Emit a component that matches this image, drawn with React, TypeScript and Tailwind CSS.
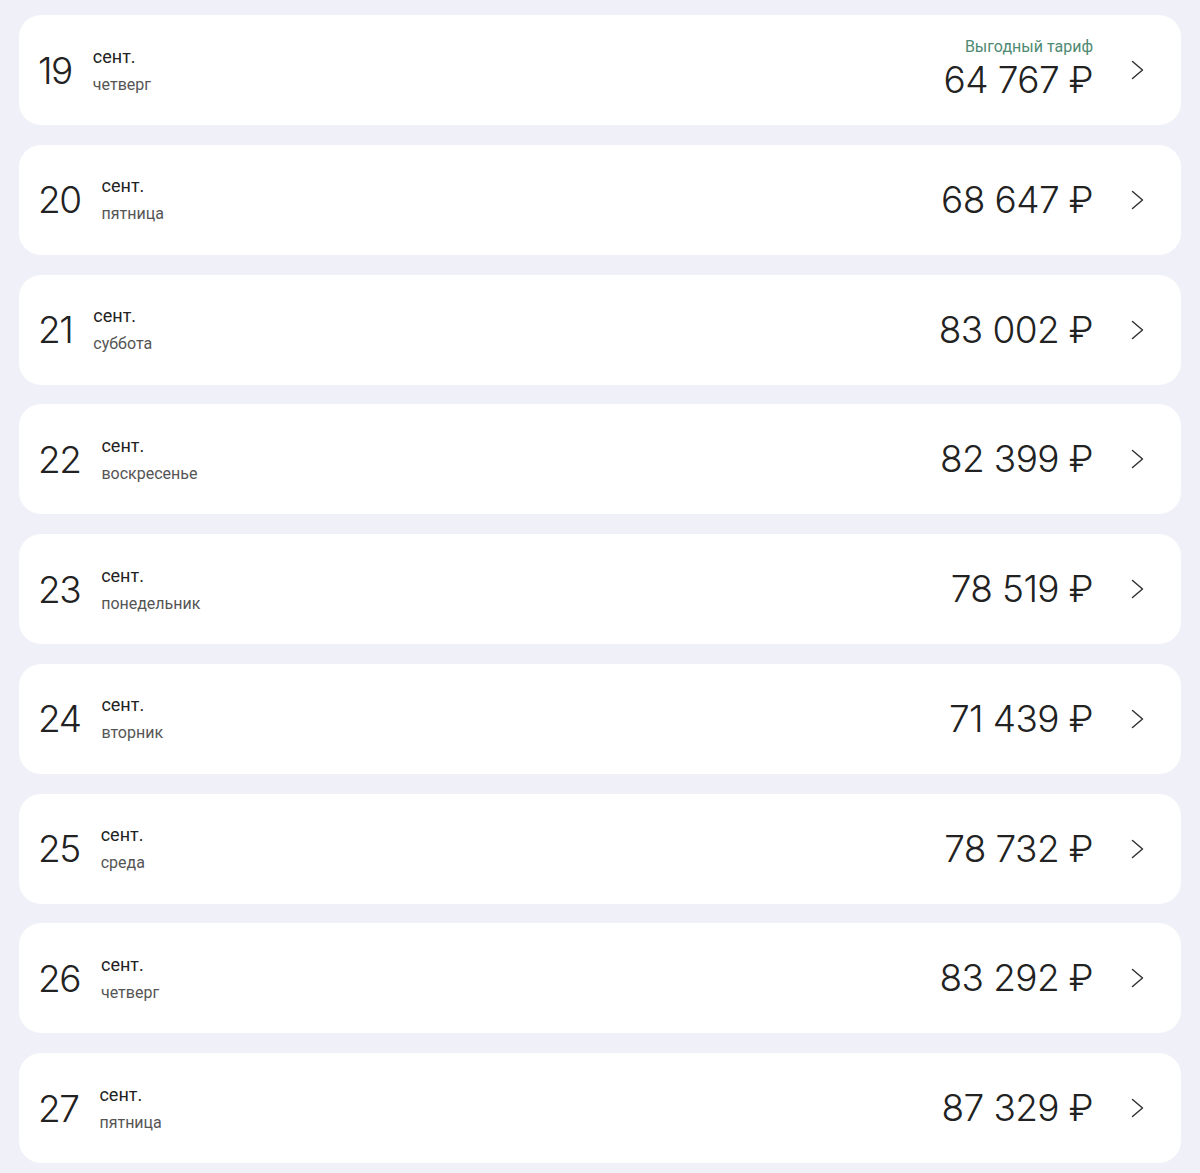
const days = [
    { d: '19', w: 'четверг', p: '64 767', best: true },
    { d: '20', w: 'пятница', p: '68 647' },
    { d: '21', w: 'суббота', p: '83 002' },
    { d: '22', w: 'воскресенье', p: '82 399' },
    { d: '23', w: 'понедельник', p: '78 519' },
    { d: '24', w: 'вторник', p: '71 439' },
    { d: '25', w: 'среда', p: '78 732' },
    { d: '26', w: 'четверг', p: '83 292' },
    { d: '27', w: 'пятница', p: '87 329' },
];

const Chevron = () => (
    <svg viewBox="0 0 13 20" className="h-[20px] w-[13px]" fill="none" stroke="#333" strokeWidth={1.5} strokeLinecap="round" strokeLinejoin="round">
        <path d="M1.5 1.5l10 8.5-10 8.5" />
    </svg>
);

export default function App() {
    return (
        <div className="min-h-[1173px] bg-[#f0f1f8] px-[19px] pt-[15px] pb-[10px] font-['Roboto',sans-serif]">
            <div className="flex flex-col gap-[19.75px]">
                {days.map((x) => (
                    <div key={x.d} className="flex h-[110px] items-center rounded-[22px] bg-white pl-[19px] pr-[37px]">
                        <span className="font-['Inter',sans-serif] text-[37px] font-light leading-none tracking-[-1.5px] text-[#222]">{x.d}</span>
                        <div className="ml-[21px] flex flex-col">
                            <span className="text-[18px] leading-[22px] text-[#222]">сент.</span>
                            <span className="mt-[7px] text-[16px] leading-[20px] text-[#555]">{x.w}</span>
                        </div>
                        <div className="ml-auto flex flex-col items-end">
                            {x.best && (
                                <span className="mb-[2px] text-[16px] leading-[18px] text-[#4f8a72]">Выгодный тариф</span>
                            )}
                            <span className="font-['Inter',sans-serif] text-[37px] font-light leading-[44px] tracking-[-0.6px] text-[#222]">{x.p} ₽</span>
                        </div>
                        <div className="ml-[38px] flex items-center">
                            <Chevron />
                        </div>
                    </div>
                ))}
            </div>
        </div>
    );
}
